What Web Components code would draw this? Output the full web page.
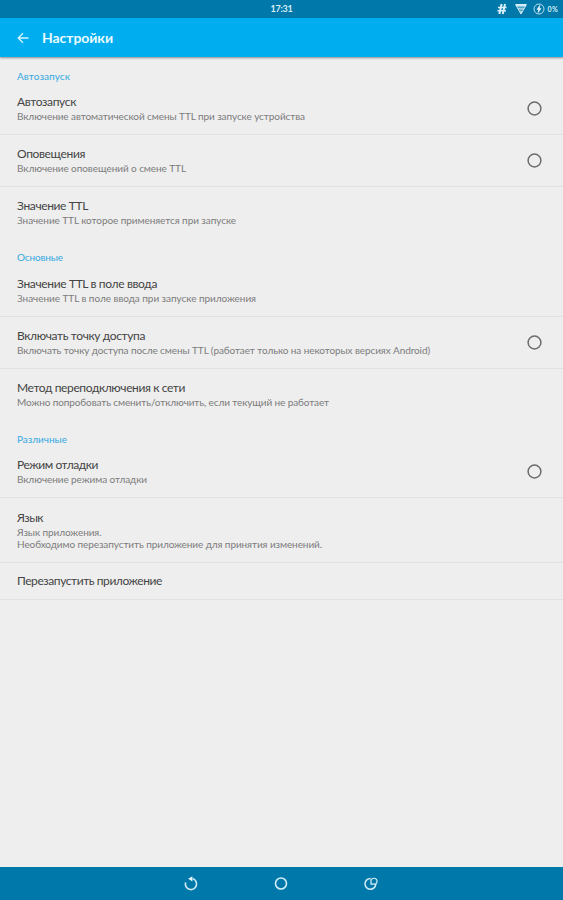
<!DOCTYPE html>
<html lang="ru">
<head>
<meta charset="utf-8">
<title>Настройки</title>
<style>
    html, body {
        margin: 0;
        height: 100%;
        overflow: hidden;
        background: #eee;
        font-family: Lato, "Liberation Sans", sans-serif;
    }
</style>
</head>
<body>
<settings-screen>
    <status-bar slot="top" time="17:31" battery="0%"></status-bar>
    <app-bar slot="top" heading="Настройки"></app-bar>

    <pref-group heading="Автозапуск" label-width="53">
        <pref-item heading="Автозапуск" toggle heading-width="59" summary-width="288">Включение автоматической смены TTL при запуске устройства</pref-item>
        <pref-item heading="Оповещения" toggle heading-width="68" summary-width="169">Включение оповещений о смене TTL</pref-item>
        <pref-item heading="Значение TTL" heading-width="71" summary-width="219">Значение TTL которое применяется при запуске</pref-item>
    </pref-group>

    <pref-group heading="Основные" label-width="46">
        <pref-item heading="Значение TTL в поле ввода" heading-width="140" summary-width="239">Значение TTL в поле ввода при запуске приложения</pref-item>
        <pref-item heading="Включать точку доступа" toggle heading-width="128" summary-width="413">Включать точку доступа после смены TTL (работает только на некоторых версиях Android)</pref-item>
        <pref-item heading="Метод переподключения к сети" heading-width="168" summary-width="312">Можно попробовать сменить/отключить, если текущий не работает</pref-item>
    </pref-group>

    <pref-group heading="Различные" label-width="50">
        <pref-item heading="Режим отладки" toggle heading-width="81" summary-width="130">Включение режима отладки</pref-item>
        <pref-item heading="Язык" tall heading-width="26" summary-width="305">Язык приложения.<br>Необходимо перезапустить приложение для принятия изменений.</pref-item>
        <pref-item heading="Перезапустить приложение" single heading-width="145"></pref-item>
    </pref-group>

    <nav-bar slot="bottom"></nav-bar>
</settings-screen>

<script>
// Adjust the letter spacing so that the longest line takes the given width
function fitText(el, width, text = el.textContent) {
    if (!width) return;
    const longest = Math.max(...text.split('<br>').map(line => line.trim().length));
    const natural = el.getBoundingClientRect().width;
    el.style.letterSpacing = `${(width - natural) / longest}px`;
}

class BaseElement extends HTMLElement {
    constructor() {
        super();
        this.attachShadow({ mode: 'open' });
    }

    connectedCallback() {
        this.shadowRoot.innerHTML = this.render();
        this.rendered();
    }

    rendered() {}
}

class SettingsScreen extends BaseElement {
    render() {
        return `
<style>
    :host {
        display: flex;
        flex-direction: column;
        height: 100vh;
        background: #eee;
    }

    main {
        flex: 1;
        min-height: 0;
        padding-top: 1px;
        box-sizing: border-box;
        overflow: hidden;
    }
</style>
<slot name="top"></slot>
<main><slot></slot></main>
<slot name="bottom"></slot>`;
    }
}

class StatusBar extends BaseElement {
    render() {
        return `
<style>
    :host {
        display: grid;
        grid-template-columns: 1fr auto 1fr;
        align-items: center;
        flex: none;
        height: 18px;
        padding: 0 5px;
        background: #0078a9;
        color: #d9f0fa;
        font-size: 9px;
        font-weight: 700;
    }

    time {
        grid-column: 2;
        line-height: 18px;
    }

    .icons {
        display: flex;
        align-items: center;
        justify-content: flex-end;
    }

    .hash { margin-right: 8px; }
    .wifi { margin-right: 6px; }
    .power { margin-right: 3px; }

    .battery {
        font-size: 7px;
        line-height: 18px;
    }

    svg { display: block; }
</style>
<time>${this.getAttribute('time')}</time>
<div class="icons">
    <svg class="hash" width="10" height="12" viewBox="0 0 10 12" fill="none" stroke="#d9f0fa" stroke-width="2">
        <path d="M4.6 1 2.4 11M8 1 5.8 11"/>
        <path d="M1 4.4h8.6M.4 7.8H9" stroke-width="1.5"/>
    </svg>
    <svg class="wifi" width="12" height="12" viewBox="0 0 12 12" fill="none" stroke="#d9f0fa">
        <path d="M.6 1.6h10.8L6 11z" fill="#d9f0fa" fill-opacity=".7"/>
        <path d="M2.5 4.3h7M4 7.2h4" stroke="#0078a9" stroke-width=".6"/>
        <path d="M1 2h10" stroke-width="1.6"/>
    </svg>
    <svg class="power" width="12" height="12" viewBox="0 0 12 12" fill="none" stroke="#b9dfef">
        <circle cx="6" cy="6" r="5"/>
        <path d="M6.8 2.3 4 6.5h1.7L5.2 9.7 8 5.5H6.3z" fill="#e8f7fd" stroke="#e8f7fd" stroke-width=".6"/>
    </svg>
    <span class="battery">${this.getAttribute('battery')}</span>
</div>`;
    }

    rendered() {
        fitText(this.shadowRoot.querySelector('time'), 22);
        fitText(this.shadowRoot.querySelector('.battery'), 10.5);
    }
}

class AppBar extends BaseElement {
    render() {
        return `
<style>
    :host {
        display: flex;
        align-items: center;
        flex: none;
        height: 39px;
        padding-left: 17px;
        background: #00aeef;
        box-shadow: 0 1px 2px rgba(0, 0, 0, .42);
        color: #eafaff;
    }

    svg {
        flex: none;
        margin-right: 13px;
    }

    h1 {
        margin: 1px 0 0;
        font-size: 14px;
        font-weight: 700;
        line-height: 20px;
        white-space: nowrap;
    }
</style>
<svg width="12" height="12" viewBox="0 0 12 12" fill="none" stroke="#d5f3fd" stroke-width="1.3">
    <path d="M11.5 6H1.2M6 1.2 1.2 6 6 10.8"/>
</svg>
<h1>${this.getAttribute('heading')}</h1>`;
    }

    rendered() {
        fitText(this.shadowRoot.querySelector('h1'), 71);
    }
}

class PrefGroup extends BaseElement {
    render() {
        return `
<style>
    :host { display: block; }

    h2 {
        height: 25px;
        margin: 0 0 0 17px;
        padding-top: 11px;
        box-sizing: border-box;
        color: #35a9e1;
        font-size: 10px;
        font-weight: 400;
        line-height: 14px;
    }

    :host(:nth-of-type(2)) h2 { height: 26px; }

    ::slotted(pref-item:last-child) {
        --divider: transparent;
    }

    :host(:last-of-type) ::slotted(pref-item:last-child) {
        --divider: #e2e2e2;
    }
</style>
<h2><span>${this.getAttribute('heading')}</span></h2>
<slot></slot>`;
    }

    rendered() {
        fitText(this.shadowRoot.querySelector('span'), Number(this.getAttribute('label-width')));
    }
}

class PrefItem extends BaseElement {
    render() {
        return `
<style>
    :host {
        display: flex;
        align-items: center;
        justify-content: space-between;
        box-sizing: border-box;
        height: 52px;
        padding: 0 21px 0 17px;
        border-bottom: 1px solid var(--divider, #e2e2e2);
    }

    :host([tall]) { height: 65px; }
    :host([single]) { height: 37px; }

    .text {
        display: flex;
        flex-direction: column;
        align-items: flex-start;
        white-space: nowrap;
    }

    .heading {
        color: #444;
        font-size: 12px;
        line-height: 16px;
    }

    .summary {
        color: #7c7c7c;
        font-size: 10px;
        line-height: 12.5px;
    }

    svg { display: block; }
</style>
<div class="text">
    <span class="heading">${this.getAttribute('heading')}</span>
    ${this.hasAttribute('single') ? '' : '<span class="summary"><slot></slot></span>'}
</div>
${this.hasAttribute('toggle') ? `
<svg width="15" height="15" viewBox="0 0 15 15" fill="none" stroke="#6c6c6c" stroke-width="1.5">
    <circle cx="7.5" cy="7.5" r="6.4"/>
</svg>` : ''}`;
    }

    rendered() {
        fitText(this.shadowRoot.querySelector('.heading'), Number(this.getAttribute('heading-width')));

        const summary = this.shadowRoot.querySelector('.summary');
        if (summary) fitText(summary, Number(this.getAttribute('summary-width')), this.innerHTML);
    }
}

class NavBar extends BaseElement {
    render() {
        return `
<style>
    :host {
        display: flex;
        align-items: center;
        justify-content: center;
        gap: 74px;
        flex: none;
        height: 33px;
        padding-right: 2px;
        background: #0078a9;
    }

    svg { display: block; }
</style>
<svg width="16" height="16" viewBox="0 0 16 16" fill="none" stroke="#d3edf8" stroke-width="1.6">
    <path d="M2.6 6.4A5.6 5.6 0 1 0 9.6 2.6"/>
    <path d="M9.4.3v5.2L5.2 2.8z" fill="#e8f8ff" stroke="none"/>
</svg>
<svg width="16" height="16" viewBox="0 0 16 16" fill="none" stroke="#d3edf8" stroke-width="1.6">
    <circle cx="8" cy="7.5" r="5.5"/>
</svg>
<svg width="16" height="16" viewBox="0 0 16 16" fill="none" stroke="#d3edf8" stroke-width="1.5">
    <path d="M7.6 2.4A5.4 5.4 0 1 0 12.8 8.2"/>
    <path d="M8.2 4a3.1 3.1 0 1 1 3.4 4.4" stroke-width="1.2"/>
    <path d="M8 3.6v4.6h4.4" stroke-width="1.3"/>
</svg>`;
    }
}

window.customElements.define('settings-screen', SettingsScreen);
window.customElements.define('status-bar', StatusBar);
window.customElements.define('app-bar', AppBar);
window.customElements.define('pref-group', PrefGroup);
window.customElements.define('pref-item', PrefItem);
window.customElements.define('nav-bar', NavBar);
</script>
</body>
</html>
